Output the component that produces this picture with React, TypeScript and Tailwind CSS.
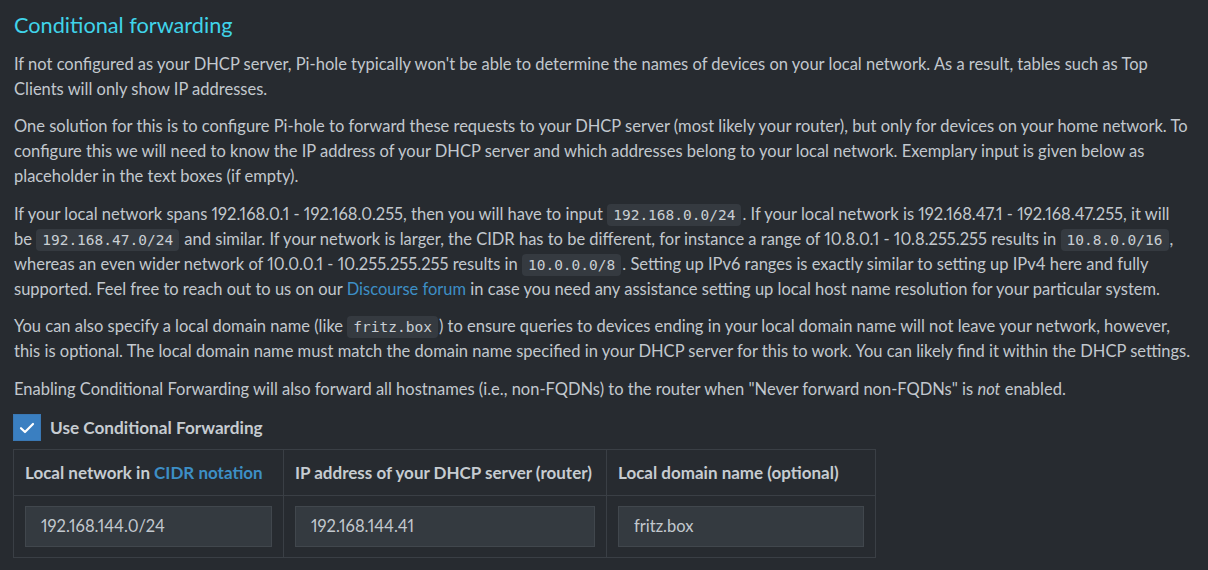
import React from "react";

function Code({ children }: { children: React.ReactNode }) {
  return (
    <code className="rounded-[4px] bg-[#353a40] px-[6px] py-[3px] text-[14.5px] leading-none text-[#c9cfd4] [font-family:'DejaVu_Sans_Mono',monospace] mr-[1px]">
      {children}
    </code>
  );
}

function A({ children }: { children: React.ReactNode }) {
  return <a className="text-[#3d8fc6]">{children}</a>;
}

export default function App() {
  return (
    <div className="min-h-[570px] w-[1208px] bg-[#272b30] px-[14px] pt-[13px] text-[16.5px] leading-[25px] text-[#c2c8ce] [font-family:Lato,sans-serif] [font-variant-numeric:proportional-nums]">
      <h3 className="mb-[14.5px] text-[21.7px] leading-[24px] text-[#40d4ea]">Conditional forwarding</h3>
      <p className="whitespace-nowrap">
        If not configured as your DHCP server, Pi-hole typically won't be able to determine the names of devices on your local network. As a result, tables such as Top
        <br />
        Clients will only show IP addresses.
      </p>
      <p className="mt-[12.5px] whitespace-nowrap">
        One solution for this is to configure Pi-hole to forward these requests to your DHCP server (most likely your router), but only for devices on your home network. To
        <br />
        configure this we will need to know the IP address of your DHCP server and which addresses belong to your local network. Exemplary input is given below as
        <br />
        placeholder in the text boxes (if empty).
      </p>
      <p className="mt-[12.5px] whitespace-nowrap">
        If your local network spans 192.168.0.1 - 192.168.0.255, then you will have to input <Code>192.168.0.0/24</Code>. If your local network is 192.168.47.1 - 192.168.47.255, it will
        <br />
        be <Code>192.168.47.0/24</Code> and similar. If your network is larger, the CIDR has to be different, for instance a range of 10.8.0.1 - 10.8.255.255 results in <Code>10.8.0.0/16</Code>,
        <br />
        whereas an even wider network of 10.0.0.1 - 10.255.255.255 results in <Code>10.0.0.0/8</Code>. Setting up IPv6 ranges is exactly similar to setting up IPv4 here and fully
        <br />
        supported. Feel free to reach out to us on our <A>Discourse forum</A> in case you need any assistance setting up local host name resolution for your particular system.
      </p>
      <p className="mt-[12.5px] whitespace-nowrap">
        You can also specify a local domain name (like <Code>fritz.box</Code>) to ensure queries to devices ending in your local domain name will not leave your network, however,
        <br />
        this is optional. The local domain name must match the domain name specified in your DHCP server for this to work. You can likely find it within the DHCP settings.
      </p>
      <p className="mt-[12.5px] whitespace-nowrap">
        Enabling Conditional Forwarding will also forward all hostnames (i.e., non-FQDNs) to the router when "Never forward non-FQDNs" is <em>not</em> enabled.
      </p>

      <div className="mt-[12.5px] flex items-center">
        <div className="ml-[-1px] flex h-[27px] w-[28px] items-center justify-center border border-[#3a78b4] bg-[#3a7fc1]">
          <svg width="16" height="12" viewBox="0 0 16 12" fill="none">
            <path d="M2 6.2 L6 10 L14 2" stroke="#ffffff" strokeWidth="2.2" strokeLinecap="round" strokeLinejoin="round" />
          </svg>
        </div>
        <span className="ml-[9px] text-[17.2px] font-bold text-[#c6ccd1]">Use Conditional Forwarding</span>
      </div>

      <table className="mt-[8px] ml-[-1px] w-[862px] table-fixed border-collapse text-[#c6ccd1]">
        <colgroup>
          <col className="w-[270px]" />
          <col className="w-[323px]" />
          <col className="w-[269px]" />
        </colgroup>
        <thead>
          <tr className="h-[46px] text-[17px]">
            <th className="whitespace-nowrap border border-[#3a3f45] px-[11px] text-left font-bold">
              Local network in <A>CIDR notation</A>
            </th>
            <th className="whitespace-nowrap border border-[#3a3f45] px-[11px] text-left font-bold">IP address of your DHCP server (router)</th>
            <th className="whitespace-nowrap border border-[#3a3f45] px-[11px] text-left font-bold">Local domain name (optional)</th>
          </tr>
        </thead>
        <tbody>
          <tr className="h-[62px]">
            {["192.168.144.0/24", "192.168.144.41", "fritz.box"].map((v) => (
              <td key={v} className="border border-[#3a3f45] px-[11px] py-0">
                <div className="flex h-[41px] w-full items-center border border-[#41474d] bg-[#343a40] px-[15px] text-[16.5px] text-[#c2c8ce]">
                  {v}
                </div>
              </td>
            ))}
          </tr>
        </tbody>
      </table>
    </div>
  );
}
